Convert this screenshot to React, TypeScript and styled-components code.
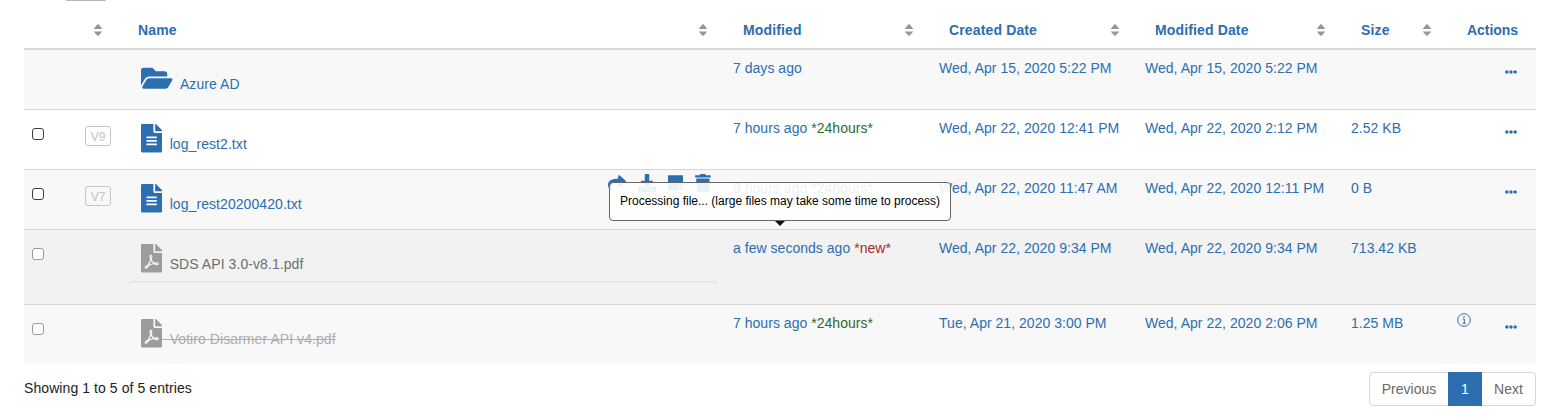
import React from "react";
import styled, { createGlobalStyle } from "styled-components";
import {
  FaDownload,
  FaEllipsisH,
  FaFileAlt,
  FaFilePdf,
  FaFolderOpen,
  FaShare,
  FaStickyNote,
  FaTrash,
} from "react-icons/fa";

const BLUE = "#2c6eb0";

const GlobalStyle = createGlobalStyle`
  * { box-sizing: border-box; }
  body {
    margin: 0;
    background: #fff;
    color: #222;
    font: 14px/20px "Liberation Sans", Arial, sans-serif;
  }
`;

const Page = styled.main`
  height: 420px;
  padding: 0 12px 0 24px;
  overflow: hidden;
`;

const ToolbarEdge = styled.div`
  width: 40px;
  height: 1px;
  margin-left: 42px;
  background: #b5b5b5;
  border-radius: 0 0 3px 3px;
`;

const Table = styled.div`
  display: flex;
  flex-direction: column;
`;

const Row = styled.div<{ $bg?: string; $tall?: boolean; $first?: boolean }>`
  display: grid;
  grid-template-columns: 53px 43px 605px 206px 206px 206px 106px 87px;
  height: ${(p) => (p.$tall ? 75 : p.$first ? 59 : 60)}px;
  background: ${(p) => p.$bg ?? "#fff"};
  border-top: ${(p) => (p.$first ? "0" : "1px solid #d6d6d6")};
  color: ${BLUE};
`;

const HeaderRow = styled(Row)`
  height: 49px;
  border-top: 0;
  border-bottom: 2px solid #d6d6d6;
  font-weight: bold;
`;

const HeadCell = styled.div<{ $tight?: boolean }>`
  display: flex;
  justify-content: space-between;
  align-items: flex-start;
  padding: 19px 17px 0 18px;
  letter-spacing: ${(p) => (p.$tight ? "-0.04px" : "0.14px")};
`;

const SortOnlyCell = styled(HeadCell)`
  justify-content: flex-end;
`;

const SortSvg = styled.svg`
  display: block;
  flex: none;
  margin-top: 3px;
  fill: #969696;
`;

const Cell = styled.div`
  padding: 8px;
  letter-spacing: 0.03px;
  white-space: nowrap;
`;

const CheckCell = styled(Cell)`
  padding-top: 18px;
`;

const Checkbox = styled.input<{ $dim?: boolean }>`
  appearance: none;
  display: block;
  width: 12px;
  height: 12px;
  margin: 0;
  background: #fff;
  border: 1px solid ${(p) => (p.$dim ? "#9a9a9a" : "#3c3c3c")};
  border-radius: 3px;
`;

const VersionCell = styled(Cell)`
  padding-top: 16px;
`;

const Version = styled.span`
  display: block;
  width: 26px;
  height: 20px;
  border: 1px solid #c4c4c4;
  border-radius: 3px;
  color: #c4c4c4;
  font-size: 12px;
  line-height: 20px;
  text-align: center;
`;

const NameCell = styled(Cell)`
  display: flex;
  flex-direction: column;
  justify-content: space-between;
  padding: 4px 8px 13px;
  letter-spacing: 0.07px;
`;

const NameLine = styled.div`
  display: flex;
  justify-content: space-between;
`;

const FileLink = styled.span<{ $icon: string; $text: string; $iconWidth: number }>`
  display: flex;
  align-items: flex-start;
  padding: 10px 0 0 13px;
  color: ${(p) => p.$text};
  svg {
    flex: none;
    width: ${(p) => p.$iconWidth}px;
    height: 28.5px;
    color: ${(p) => p.$icon};
  }
`;

const FileName = styled.span<{ $removed?: boolean }>`
  padding-top: 10px;
  margin-left: -0.5px;
  white-space: pre;
  text-decoration: ${(p) => (p.$removed ? "line-through" : "none")};
`;

const HoverTools = styled.div`
  display: flex;
  gap: 12px;
  margin-right: 6px;
  svg {
    display: block;
    width: 18px;
    height: 18px;
  }
  svg:nth-child(n + 3) {
    width: 15.75px;
  }
`;

const Progress = styled.div`
  height: 10px;
  background: #f3f3f3;
  border-radius: 4px;
  box-shadow: inset 0 1px 2px rgba(0, 0, 0, 0.1);
`;

const Tag = styled.span<{ $fresh?: boolean }>`
  color: ${(p) => (p.$fresh ? "#a12c2c" : "#2f6a2f")};
`;

const ActionCell = styled(Cell)`
  display: flex;
  justify-content: flex-end;
  gap: 34px;
  padding: 8px 19px 0 0;
`;

const InfoSvg = styled.svg`
  display: block;
`;

const Dots = styled(FaEllipsisH)`
  display: block;
  margin-top: 8px;
`;

const Footer = styled.footer`
  display: flex;
  justify-content: space-between;
  padding-top: 8px;
`;

const Summary = styled.div`
  padding-top: 6px;
  letter-spacing: 0.08px;
`;

const Pagination = styled.nav`
  display: flex;
  height: 34px;
  border: 1px solid #d8d8d8;
  border-radius: 4px;
`;

const PageButton = styled.button<{ $active?: boolean; $width: number }>`
  width: ${(p) => p.$width}px;
  margin: ${(p) => (p.$active ? "-1px 0" : "0")};
  padding: 0;
  border: 0;
  background: ${(p) => (p.$active ? BLUE : "transparent")};
  color: ${(p) => (p.$active ? "#fff" : "#686868")};
  font: inherit;
`;

const Tooltip = styled.div`
  position: absolute;
  top: 182px;
  left: 609px;
  width: 342px;
  height: 39px;
  padding-left: 10px;
  border: 1px solid #666;
  border-radius: 4px;
  background: rgba(255, 255, 255, 0.9);
  color: #000;
  font-size: 12px;
  line-height: 36px;
  white-space: nowrap;
  &::after {
    content: "";
    position: absolute;
    top: 38px;
    left: 165px;
    border: 5px solid transparent;
    border-top-color: #111;
    border-bottom: 0;
  }
`;

const SortIcon = () => (
  <SortSvg width="10" height="14" viewBox="0 0 10 14">
    <path d="M0.7 6L4.2 1.6Q5 0.7 5.8 1.6L9.3 6ZM0.7 8.4L4.2 12.4Q5 13.3 5.8 12.4L9.3 8.4Z" />
  </SortSvg>
);

const InfoIcon = () => (
  <InfoSvg width="14" height="14" viewBox="0 0 14 14" fill="none" stroke={BLUE}>
    <circle cx="7" cy="7" r="6.3" />
    <path d="M5.7 5.9H7.3V10.2M5.6 10.3H8.8" />
    <circle cx="7" cy="3.7" r="0.8" fill={BLUE} stroke="none" />
  </InfoSvg>
);

type Entry = {
  name: string;
  kind: "folder" | "text" | "pdf";
  version?: string;
  modified: string;
  tag?: "24hours" | "new";
  created: string;
  modifiedDate: string;
  size?: string;
  bg: string;
  tools?: boolean;
  processing?: boolean;
  removed?: boolean;
};

const entries: Entry[] = [
  { name: "Azure AD", kind: "folder", modified: "7 days ago", created: "Wed, Apr 15, 2020 5:22 PM", modifiedDate: "Wed, Apr 15, 2020 5:22 PM", bg: "#f8f8f8" },
  { name: "log_rest2.txt", kind: "text", version: "V9", modified: "7 hours ago", tag: "24hours", created: "Wed, Apr 22, 2020 12:41 PM", modifiedDate: "Wed, Apr 22, 2020 2:12 PM", size: "2.52 KB", bg: "#fff" },
  { name: "log_rest20200420.txt", kind: "text", version: "V7", modified: "9 hours ago", tag: "24hours", created: "Wed, Apr 22, 2020 11:47 AM", modifiedDate: "Wed, Apr 22, 2020 12:11 PM", size: "0 B", bg: "#f8f8f8", tools: true },
  { name: "SDS API 3.0-v8.1.pdf", kind: "pdf", modified: "a few seconds ago", tag: "new", created: "Wed, Apr 22, 2020 9:34 PM", modifiedDate: "Wed, Apr 22, 2020 9:34 PM", size: "713.42 KB", bg: "#f2f2f2", processing: true },
  { name: "Votiro Disarmer API v4.pdf", kind: "pdf", modified: "7 hours ago", tag: "24hours", created: "Tue, Apr 21, 2020 3:00 PM", modifiedDate: "Wed, Apr 22, 2020 2:06 PM", size: "1.25 MB", bg: "#f8f8f8", removed: true },
];

const kindIcons = {
  folder: { Icon: FaFolderOpen, width: 31.5 },
  text: { Icon: FaFileAlt, width: 21.25 },
  pdf: { Icon: FaFilePdf, width: 21.25 },
};

const EntryRow = ({ entry, first }: { entry: Entry; first: boolean }) => {
  const { Icon, width } = kindIcons[entry.kind];
  const dim = entry.kind === "pdf";
  const textColor = entry.removed ? "#adadad" : entry.processing ? "#6e6e6e" : BLUE;
  return (
    <Row $bg={entry.bg} $first={first} $tall={entry.processing}>
      <CheckCell>{entry.kind !== "folder" && <Checkbox type="checkbox" $dim={dim} />}</CheckCell>
      <VersionCell>{entry.version && <Version>{entry.version}</Version>}</VersionCell>
      <NameCell>
        <NameLine>
          <FileLink $icon={dim ? "#9c9c9c" : BLUE} $text={textColor} $iconWidth={width}>
            <Icon />
            <FileName $removed={entry.removed}>{"\u00a0\u00a0" + entry.name}</FileName>
          </FileLink>
          {entry.tools && (
            <HoverTools>
              <FaShare />
              <FaDownload />
              <FaStickyNote />
              <FaTrash />
            </HoverTools>
          )}
        </NameLine>
        {entry.processing && <Progress />}
      </NameCell>
      <Cell>
        {entry.modified} {entry.tag && <Tag $fresh={entry.tag === "new"}>*{entry.tag}*</Tag>}
      </Cell>
      <Cell>{entry.created}</Cell>
      <Cell>{entry.modifiedDate}</Cell>
      <Cell>{entry.size}</Cell>
      <ActionCell>
        {entry.removed && <InfoIcon />}
        {!entry.processing && <Dots size={12} />}
      </ActionCell>
    </Row>
  );
};

export default function App() {
  return (
    <Page>
      <GlobalStyle />
      <ToolbarEdge />
      <Table>
        <HeaderRow>
          <HeadCell />
          <SortOnlyCell><SortIcon /></SortOnlyCell>
          {["Name", "Modified", "Created Date", "Modified Date", "Size"].map((title) => (
            <HeadCell key={title}>{title}<SortIcon /></HeadCell>
          ))}
          <HeadCell $tight>Actions</HeadCell>
        </HeaderRow>
        {entries.map((entry, i) => (
          <EntryRow key={entry.name} entry={entry} first={i === 0} />
        ))}
      </Table>
      <Footer>
        <Summary>Showing 1 to 5 of 5 entries</Summary>
        <Pagination>
          <PageButton $width={78}>Previous</PageButton>
          <PageButton $width={34} $active>1</PageButton>
          <PageButton $width={53}>Next</PageButton>
        </Pagination>
      </Footer>
      <Tooltip>Processing file... (large files may take some time to process)</Tooltip>
    </Page>
  );
}
